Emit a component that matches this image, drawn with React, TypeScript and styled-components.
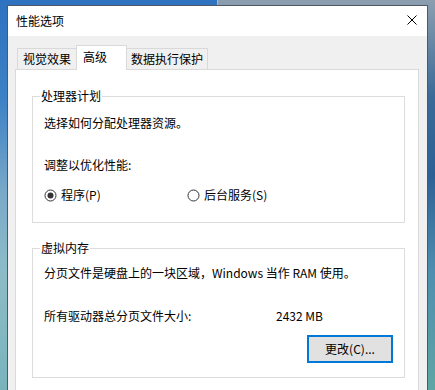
import React from "react";
import styled, { createGlobalStyle } from "styled-components";

const Global = createGlobalStyle`
  html, body { margin: 0; padding: 0; }
  body {
    font-family: "Noto Sans CJK SC", "Microsoft YaHei", sans-serif;
    font-size: 12px;
    color: #000;
  }
`;

const Desktop = styled.div`
  width: 435px;
  height: 390px;
  overflow: hidden;
  box-sizing: border-box;
  padding: 5px 7px 0 7px;
  background:
    linear-gradient(180deg, #2f72bf 0%, #3c80c6 25%, #7aaac8 50%, #8dbcc8 70%, #78b3bc 100%) left / 50% 100% no-repeat,
    linear-gradient(180deg, #8c9fb0 0%, #3a6a98 25%, #2d6196 45%, #4f8fb0 70%, #5ea6a4 100%) right / 50% 100% no-repeat;
`;

const Window = styled.div`
  display: flex;
  flex-direction: column;
  height: 420px;
  border: 1px solid #4f5864;
  background: #f0f0f0;
`;

const TitleBar = styled.div`
  display: flex;
  align-items: center;
  justify-content: space-between;
  height: 30px;
  padding: 0 10px 0 8px;
  background: #fff;
`;

const Title = styled.span`
  font-size: 12px;
  line-height: 16px;
  margin-top: -1px;
`;

const CloseBox = styled.span`
  display: flex;
  width: 10px;
  height: 10px;
  margin-top: -3px;
`;

const Body = styled.div`
  display: flex;
  flex-direction: column;
  flex: 1;
  padding: 9px 8px 0 7px;
`;

const TabRow = styled.div`
  display: flex;
  align-items: flex-end;
  padding-left: 2px;
`;

const Tab = styled.div<{ $active?: boolean; $w: number; $pl: number }>`
  position: relative;
  box-sizing: border-box;
  width: ${(p) => p.$w}px;
  height: ${(p) => (p.$active ? 25 : 21)}px;
  margin-left: -1px;
  margin-bottom: ${(p) => (p.$active ? -1 : 0)}px;
  padding-left: ${(p) => p.$pl}px;
  padding-bottom: ${(p) => (p.$active ? 3 : 0)}px;
  display: flex;
  align-items: center;
  border: 1px solid #d9d9d9;
  border-bottom: none;
  background: ${(p) => (p.$active ? "#fff" : "#f0f0f0")};
  z-index: ${(p) => (p.$active ? 2 : 1)};
  line-height: 16px;
  white-space: nowrap;
  &:first-child { margin-left: 0; }
`;

const Panel = styled.div`
  flex: 1;
  width: 404px;
  box-sizing: border-box;
  border: 1px solid #d9d9d9;
  background: #fff;
  padding: 0 13px 0 16px;
  display: flex;
  flex-direction: column;
`;

const Group = styled.fieldset<{ $mt: number; $pt: number; $pb: number }>`
  margin: ${(p) => p.$mt}px 0 0 0;
  padding: ${(p) => p.$pt}px 11px ${(p) => p.$pb}px 11px;
  border: 1px solid #dcdcdc;
  min-width: 0;
  display: flex;
  flex-direction: column;
`;

const Legend = styled.legend`
  margin-left: -4px;
  padding: 0 1px;
  line-height: 16px;
  font-size: 12px;
`;

const Line = styled.div<{ $mt?: number }>`
  line-height: 16px;
  margin-top: ${(p) => p.$mt ?? 0}px;
  white-space: nowrap;
`;

const RadioRow = styled.div`
  display: flex;
  margin-top: 14px;
  line-height: 16px;
`;

const RadioOption = styled.label<{ $w?: number }>`
  display: flex;
  align-items: center;
  gap: 4px;
  width: ${(p) => (p.$w ? `${p.$w}px` : "auto")};
`;

const SizeRow = styled.div`
  display: grid;
  grid-template-columns: 232px auto;
  line-height: 16px;
  margin-top: 27px;
`;

const ButtonRow = styled.div`
  display: flex;
  justify-content: flex-end;
  margin-top: 11px;
`;

const Button = styled.button`
  box-sizing: border-box;
  width: 86px;
  height: 28px;
  border: 2px solid #0078d7;
  background: #e1e1e1;
  font-family: inherit;
  font-size: 12px;
  color: #000;
  padding: 0;
  line-height: 16px;
`;

const Radio = ({ checked }: { checked?: boolean }) => (
  <svg width="13" height="13" viewBox="0 0 13 13">
    <circle cx="6.5" cy="6.5" r="5.5" fill="#fff" stroke="#333" strokeWidth="1" />
    {checked && <circle cx="6.5" cy="6.5" r="3" fill="#333" />}
  </svg>
);

export default function App() {
  return (
    <>
      <Global />
      <Desktop>
        <Window>
          <TitleBar>
            <Title>性能选项</Title>
            <CloseBox>
              <svg width="10" height="10" viewBox="0 0 10 10">
                <path d="M0.5 0.5 L9.5 9.5 M9.5 0.5 L0.5 9.5" stroke="#000" strokeWidth="1" />
              </svg>
            </CloseBox>
          </TitleBar>
          <Body>
            <TabRow>
              <Tab $w={60} $pl={5}>视觉效果</Tab>
              <Tab $active $w={51} $pl={6}>高级</Tab>
              <Tab $w={82} $pl={4}>数据执行保护</Tab>
            </TabRow>
            <Panel>
              <Group $mt={18} $pt={11} $pb={19}>
                <Legend>处理器计划</Legend>
                <Line>选择如何分配处理器资源。</Line>
                <Line $mt={26}>调整以优化性能:</Line>
                <RadioRow>
                  <RadioOption $w={143}>
                    <Radio checked />
                    程序(P)
                  </RadioOption>
                  <RadioOption>
                    <Radio />
                    后台服务(S)
                  </RadioOption>
                </RadioRow>
              </Group>
              <Group $mt={17} $pt={9} $pb={14}>
                <Legend>虚拟内存</Legend>
                <Line>分页文件是硬盘上的一块区域，Windows 当作 RAM 使用。</Line>
                <SizeRow>
                  <span>所有驱动器总分页文件大小:</span>
                  <span>2432 MB</span>
                </SizeRow>
                <ButtonRow>
                  <Button>更改(C)...</Button>
                </ButtonRow>
              </Group>
            </Panel>
          </Body>
        </Window>
      </Desktop>
    </>
  );
}
